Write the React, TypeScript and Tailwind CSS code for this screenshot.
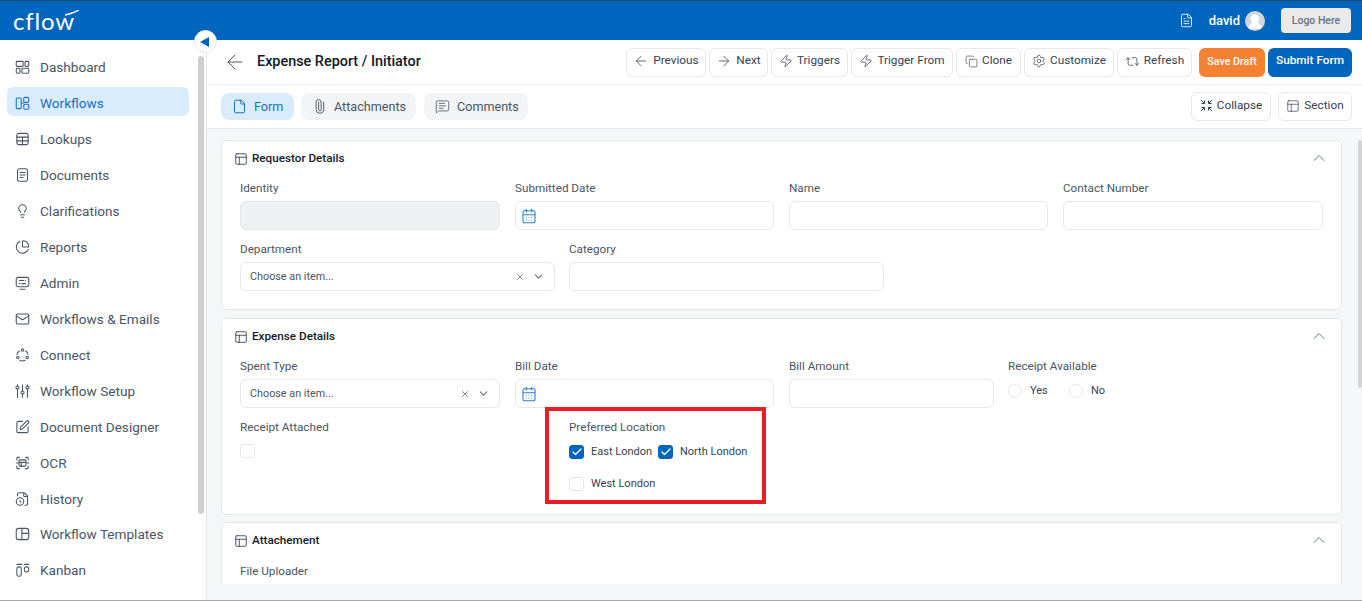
import React from "react";
import {
  ArrowLeft,
  ArrowRight,
  ChevronDown,
  ChevronUp,
  Copy,
  Zap,
  Settings,
  Repeat2,
  PanelsTopLeft,
  File,
  FileText,
  Paperclip,
  MessageSquareText,
  X,
  Check,
  Lightbulb,
  ChartPie,
  Mail,
  SquarePen,
  FileClock,
  CalendarDays,
  UserRound,
} from "lucide-react";

const iconProps = {
  width: 18,
  height: 18,
  viewBox: "0 0 24 24",
  fill: "none",
  stroke: "currentColor",
  strokeWidth: 1.7,
  strokeLinecap: "round" as const,
  strokeLinejoin: "round" as const,
};

// Sidebar icons lucide has no close match for
const DashIcon = () => (
  <svg {...iconProps}>
    <rect x="2" y="3" width="11" height="8" rx="1.5" />
    <rect x="16" y="3" width="6" height="8" rx="1.5" />
    <rect x="2" y="14" width="6" height="8" rx="1.5" />
    <rect x="11" y="14" width="11" height="8" rx="1.5" />
  </svg>
);
const FlowIcon = () => (
  <svg {...iconProps}>
    <rect x="2" y="4" width="8" height="17" rx="2" />
    <rect x="14" y="3" width="8" height="8" rx="2" />
    <rect x="14" y="14" width="8" height="8" rx="2" />
    <path d="M10 12h4" />
  </svg>
);
const TableIcon = () => (
  <svg {...iconProps}>
    <rect x="3" y="3" width="18" height="18" rx="3" />
    <path d="M3 9h18M3 15h18M12 9v12" />
  </svg>
);
const DocIcon = () => (
  <svg {...iconProps}>
    <rect x="4" y="2" width="16" height="20" rx="3" />
    <path d="M8 8h8M8 12h8M8 16h5" />
  </svg>
);
const AdminIcon = () => (
  <svg {...iconProps}>
    <rect x="2" y="3" width="20" height="15" rx="3" />
    <path d="M7 8h7M17 8h0M7 13h1M11 13h6M8 22h8" />
  </svg>
);
const ConnectIcon = () => (
  <svg {...iconProps}>
    <circle cx="12" cy="4" r="2" />
    <circle cx="4.5" cy="16" r="2" />
    <circle cx="19.5" cy="16" r="2" />
    <path d="M7 5.5A9 9 0 0 0 3.2 11M17 5.5A9 9 0 0 1 20.8 11M8 20.5a9 9 0 0 0 8 0" />
  </svg>
);
const SetupIcon = () => (
  <svg {...iconProps}>
    <path d="M4 2v2M4 9v13M12 2v10M12 17v5M20 2v2M20 9v13" />
    <circle cx="4" cy="6.5" r="2.5" />
    <circle cx="12" cy="14.5" r="2.5" />
    <circle cx="20" cy="6.5" r="2.5" />
  </svg>
);
const OcrIcon = () => (
  <svg {...iconProps}>
    <path d="M3 7V4a1 1 0 0 1 1-1h3M17 3h3a1 1 0 0 1 1 1v3M21 17v3a1 1 0 0 1-1 1h-3M7 21H4a1 1 0 0 1-1-1v-3" />
    <rect x="6.5" y="7" width="11" height="10" rx="1.5" />
    <path d="M6.5 11h11M10 11v6M2 12h3M19 12h3" />
  </svg>
);
const TemplateIcon = () => (
  <svg {...iconProps}>
    <rect x="2" y="3" width="20" height="18" rx="4" />
    <path d="M11 3v18M11 11h11" />
  </svg>
);
const KanbanIcon = () => (
  <svg {...iconProps}>
    <path d="M3 3h8M15 3h7" />
    <rect x="3" y="7" width="7" height="15" rx="3" />
    <rect x="15" y="7" width="7" height="8" rx="3" />
  </svg>
);
const CollapseIcon = () => (
  <svg width="13" height="13" viewBox="0 0 13 13" fill="none" stroke="currentColor" strokeWidth="1">
    <path d="M1 1l3.5 3.5M4.5 1.5v3h-3M12 1L8.5 4.5M8.5 1.5v3h3M1 12l3.5-3.5M4.5 11.5v-3h-3M12 12L8.5 8.5M8.5 11.5v-3h3" />
  </svg>
);

const navItems = [
  { label: "Dashboard", icon: <DashIcon /> },
  { label: "Workflows", icon: <FlowIcon />, active: true },
  { label: "Lookups", icon: <TableIcon /> },
  { label: "Documents", icon: <DocIcon /> },
  { label: "Clarifications", icon: <Lightbulb size={18} strokeWidth={1.7} /> },
  { label: "Reports", icon: <ChartPie size={18} strokeWidth={1.7} /> },
  { label: "Admin", icon: <AdminIcon /> },
  { label: "Workflows & Emails", icon: <Mail size={18} strokeWidth={1.7} /> },
  { label: "Connect", icon: <ConnectIcon /> },
  { label: "Workflow Setup", icon: <SetupIcon /> },
  { label: "Document Designer", icon: <SquarePen size={18} strokeWidth={1.7} /> },
  { label: "OCR", icon: <OcrIcon /> },
  { label: "History", icon: <FileClock size={18} strokeWidth={1.7} /> },
  { label: "Workflow Templates", icon: <TemplateIcon />, tight: true },
  { label: "Kanban", icon: <KanbanIcon /> },
];

function Sidebar() {
  return (
    <aside className="relative flex h-full w-[207px] shrink-0 border-r border-[#e5e7eb] bg-white">
      <nav className="w-[198px] shrink-0 pl-[7px] pt-[11px]">
        {navItems.map((item) => (
          <div
            key={item.label}
            className={`mb-[7px] flex h-[29px] w-[182px] items-center gap-[10px] rounded-md pl-2 pt-[3px] text-[13.6px] ${
              item.tight ? "-mt-px" : ""
            } ${item.active ? "bg-[#d9ecfd] text-[#1a6fc4]" : "text-[#4b5563]"}`}
          >
            <span className="flex w-[15px] justify-center">{item.icon}</span>
            <span>{item.label}</span>
          </div>
        ))}
      </nav>
      {/* scrollbar */}
      <div className="mt-4 h-[458px] w-[6px] rounded-sm bg-[#cfcfcf]" />
    </aside>
  );
}

function ToolButton({ icon, label, w }: { icon: React.ReactNode; label: string; w: string }) {
  return (
    <button className={`flex h-[29px] items-center justify-center gap-[4px] rounded-md border border-[#e5e7eb] bg-white pb-[2px] text-[11.8px] text-[#374151] ${w}`}>
      {icon}
      {label}
    </button>
  );
}

function Tab({ icon, label, active, w }: { icon: React.ReactNode; label: string; active?: boolean; w: string }) {
  return (
    <div
      className={`flex h-[27px] items-center gap-[7px] rounded-lg pl-[11px] text-[12.6px] ${w} ${
        active ? "bg-[#d9ecfd] text-[#1a6fc4]" : "bg-[#f3f4f6] text-[#4b5563]"
      }`}
    >
      {icon}
      <span className="pt-px">{label}</span>
    </div>
  );
}

function Label({ children }: { children: React.ReactNode }) {
  return <div className="h-4 text-[11.7px] leading-4 text-[#4b5563]">{children}</div>;
}

function Input({ disabled, date }: { disabled?: boolean; date?: boolean }) {
  return (
    <div
      className={`flex h-[29px] items-center rounded-md border border-[#e5e7eb] pl-[5px] ${
        disabled ? "bg-[#eff0f2]" : "bg-white"
      }`}
    >
      {date && <CalendarDays size={16} strokeWidth={1.6} className="text-[#2f7fd1]" />}
    </div>
  );
}

function Select() {
  return (
    <div className="flex h-[29px] items-center rounded-md border border-[#e5e7eb] bg-white pl-[9px] pr-[9px] text-[10.8px] text-[#4b5563]">
      <span className="flex-1 pt-px">Choose an item...</span>
      <X size={10} className="mr-[7px] text-[#6b7280]" />
      <ChevronDown size={13} className="text-[#6b7280]" />
    </div>
  );
}

function Field({ label, w, gap, children }: { label: string; w: string; gap: string; children: React.ReactNode }) {
  return (
    <div className={`${w} shrink-0`}>
      <Label>{label}</Label>
      <div className={gap}>{children}</div>
    </div>
  );
}

function CheckBox({ checked }: { checked?: boolean }) {
  return (
    <span
      className={`flex h-[14px] w-[15px] shrink-0 items-center justify-center rounded-[3px] border ${
        checked ? "border-[#0065bd] bg-[#0065bd]" : "border-[#e5e7eb] bg-white"
      }`}
    >
      {checked && <Check size={12} strokeWidth={2.5} className="text-white" />}
    </span>
  );
}

function Radio({ label, w }: { label: string; w: string }) {
  return (
    <div className={`flex items-center gap-2 text-[11px] text-[#374151] ${w}`}>
      <span className="h-[14px] w-[14px] rounded-full border border-[#e5e7eb]" />
      {label}
    </div>
  );
}

function Card({ title, className, children }: { title: string; className: string; children: React.ReactNode }) {
  return (
    <section className={`w-[1121px] rounded-md border border-[#e5e7eb] bg-white ${className}`}>
      <div className="flex h-[34px] items-center pl-3 pr-[12px]">
        <PanelsTopLeft size={14} strokeWidth={1.5} className="mr-[4px] mt-[1px] text-[#374151]" />
        <span className="flex-1 pt-[2px] text-[11.7px] font-medium text-[#111827]">{title}</span>
        <ChevronUp size={20} strokeWidth={1.1} className="text-[#4f6b8a]" />
      </div>
      <div className="pl-[18px]">{children}</div>
    </section>
  );
}

export default function App() {
  return (
    <div className="relative flex h-[601px] w-[1362px] flex-col overflow-hidden bg-white font-['Roboto',sans-serif]">
      {/* Top bar */}
      <header className="flex h-10 shrink-0 items-center border-t border-[#2b4a66] bg-[#0065bd] pl-[13px] pr-[11px]">
        <div className="relative flex items-center text-[24px] leading-none tracking-[0.8px] text-white">
          <span className="font-['Lato',sans-serif]">cflow</span>
          <svg width="14" height="6" viewBox="0 0 14 6" className="absolute -right-[4px] top-[1px]">
            <path d="M0 5 C5 4 9 3 14 0" stroke="white" strokeWidth="1.5" fill="none" />
          </svg>
        </div>
        <div className="ml-auto flex items-center">
          <FileText size={15} strokeWidth={1.4} className="text-white" />
          <span className="ml-[15px] text-[13px] font-medium text-white">david</span>
          <span className="ml-[5px] flex h-5 w-5 items-center justify-center overflow-hidden rounded-full bg-[#d4d7da]">
            <UserRound size={18} fill="white" stroke="white" className="mt-[3px]" />
          </span>
          <button className="ml-4 h-[25px] w-[70px] rounded bg-[#eaeaea] text-[10.5px] font-medium text-[#6b7280]">
            Logo Here
          </button>
        </div>
      </header>

      <div className="flex min-h-0 flex-1">
        <Sidebar />

        <main className="flex min-w-0 flex-1 flex-col bg-[#f5f6f8]">
          {/* Title + actions */}
          <div className="flex h-[45px] shrink-0 items-center border-b border-[#e5e7eb] bg-white pl-[16px] pr-[10px]">
            <ArrowLeft size={24} strokeWidth={1} className="text-[#4b5563]" />
            <h1 className="mb-px ml-[10px] text-[14.4px] font-medium text-[#111827]">Expense Report / Initiator</h1>
            <div className="ml-auto flex items-center gap-[3px]">
              <ToolButton w="w-[80px]" icon={<ArrowLeft size={16} strokeWidth={1.2} />} label="Previous" />
              <ToolButton w="w-[59px]" icon={<ArrowRight size={16} strokeWidth={1.2} />} label="Next" />
              <ToolButton w="w-[77px]" icon={<Zap size={14} strokeWidth={1.2} />} label="Triggers" />
              <ToolButton w="w-[102px]" icon={<Zap size={14} strokeWidth={1.2} />} label="Trigger From" />
              <ToolButton w="w-[65px]" icon={<Copy size={13} strokeWidth={1.2} />} label="Clone" />
              <ToolButton w="w-[90px]" icon={<Settings size={14} strokeWidth={1.2} />} label="Customize" />
              <ToolButton w="w-[75px]" icon={<Repeat2 size={15} strokeWidth={1.2} />} label="Refresh" />
              <button className="ml-1 h-[29px] w-[66px] rounded-md bg-[#f58233] text-[10.7px] font-medium text-white">
                Save Draft
              </button>
              <button className="h-[29px] w-[84px] rounded-md bg-[#0065bd] pb-[2px] text-[11.8px] font-medium text-white">
                Submit Form
              </button>
            </div>
          </div>

          {/* Tabs */}
          <div className="flex h-11 shrink-0 items-center gap-[7px] border-b border-[#e5e7eb] bg-white pl-[14px] pr-[10px]">
            <Tab w="w-[73px]" active icon={<File size={15} strokeWidth={1.6} />} label="Form" />
            <Tab w="w-[115px]" icon={<Paperclip size={15} strokeWidth={1.4} className="-rotate-45" />} label="Attachments" />
            <div className="ml-px">
              <Tab w="w-[104px]" icon={<MessageSquareText size={15} strokeWidth={1.3} />} label="Comments" />
            </div>
            <div className="ml-auto flex gap-[7px]">
              <ToolButton w="w-[80px]" icon={<CollapseIcon />} label="Collapse" />
              <ToolButton w="w-[74px]" icon={<PanelsTopLeft size={14} strokeWidth={1.2} />} label="Section" />
            </div>
          </div>

          {/* Form sections */}
          <div className="relative h-[455px] shrink-0 overflow-hidden pl-[14px] pt-[11px]">
            <Card title="Requestor Details" className="h-[170px]">
              <div className="flex gap-[15px] pt-[5px]">
                <Field label="Identity" w="w-[260px]" gap="mt-[5px]"><Input disabled /></Field>
                <Field label="Submitted Date" w="w-[259px]" gap="mt-[5px]"><Input date /></Field>
                <Field label="Name" w="w-[259px]" gap="mt-[5px]"><Input /></Field>
                <Field label="Contact Number" w="w-[260px]" gap="mt-[5px]"><Input /></Field>
              </div>
              <div className="mt-[11px] flex gap-[14px]">
                <Field label="Department" w="w-[315px]" gap="mt-[5px]"><Select /></Field>
                <Field label="Category" w="w-[315px]" gap="mt-[5px]"><Input /></Field>
              </div>
            </Card>

            <Card title="Expense Details" className="mt-[8px] h-[197px]">
              <div className="flex gap-[15px] pt-[5px]">
                <Field label="Spent Type" w="w-[260px]" gap="mt-[5px]"><Select /></Field>
                <Field label="Bill Date" w="w-[259px]" gap="mt-[5px]"><Input date /></Field>
                <Field label="Bill Amount" w="w-[205px]" gap="mt-[5px]"><Input /></Field>
                <Field label="Receipt Available" w="-ml-px w-[200px]" gap="mt-[8px]">
                  <div className="flex h-[18px] items-center">
                    <Radio w="w-[61px]" label="Yes" />
                    <Radio w="w-[50px]" label="No" />
                  </div>
                </Field>
              </div>
              <div className="mt-[11px] flex">
                <Field label="Receipt Attached" w="w-[329px]" gap="mt-[9px]"><CheckBox /></Field>
                <div>
                  <Label>Preferred Location</Label>
                  <div className="mt-[9px] flex items-center text-[11px] text-[#374151]">
                    <CheckBox checked />
                    <span className="ml-[7px] w-[67px]">East London</span>
                    <CheckBox checked />
                    <span className="ml-[7px]">North London</span>
                  </div>
                  <div className="mt-[15px] flex items-center text-[11px] text-[#374151]">
                    <CheckBox />
                    <span className="ml-[7px]">West London</span>
                  </div>
                </div>
              </div>
            </Card>

            <Card title="Attachement" className="mt-[7px] h-[100px]">
              <div className="pt-[6px]">
                <Label>File Uploader</Label>
              </div>
            </Card>

            {/* scrollbar */}
            <div className="absolute right-0 top-[11px] h-[248px] w-[4px] rounded-sm bg-[#d4d4d4]" />
          </div>
        </main>
      </div>

      {/* Collapse toggle */}
      <button className="absolute left-[194px] top-[30px] flex h-[23px] w-[23px] items-center justify-center rounded-full border border-[#e5e7eb] bg-white">
        <span className="mr-[2px] h-0 w-0 border-y-[5px] border-r-[9px] border-y-transparent border-r-[#0065bd]" />
      </button>

      {/* Highlight box drawn over the form */}
      <div className="pointer-events-none absolute left-[545px] top-[407px] h-[97px] w-[221px] border-[4px] border-[#ed1c24]" />

      {/* Bottom edge of the window */}
      <div className="absolute bottom-0 left-0 h-px w-full bg-[#a8a8a8]" />
    </div>
  );
}
